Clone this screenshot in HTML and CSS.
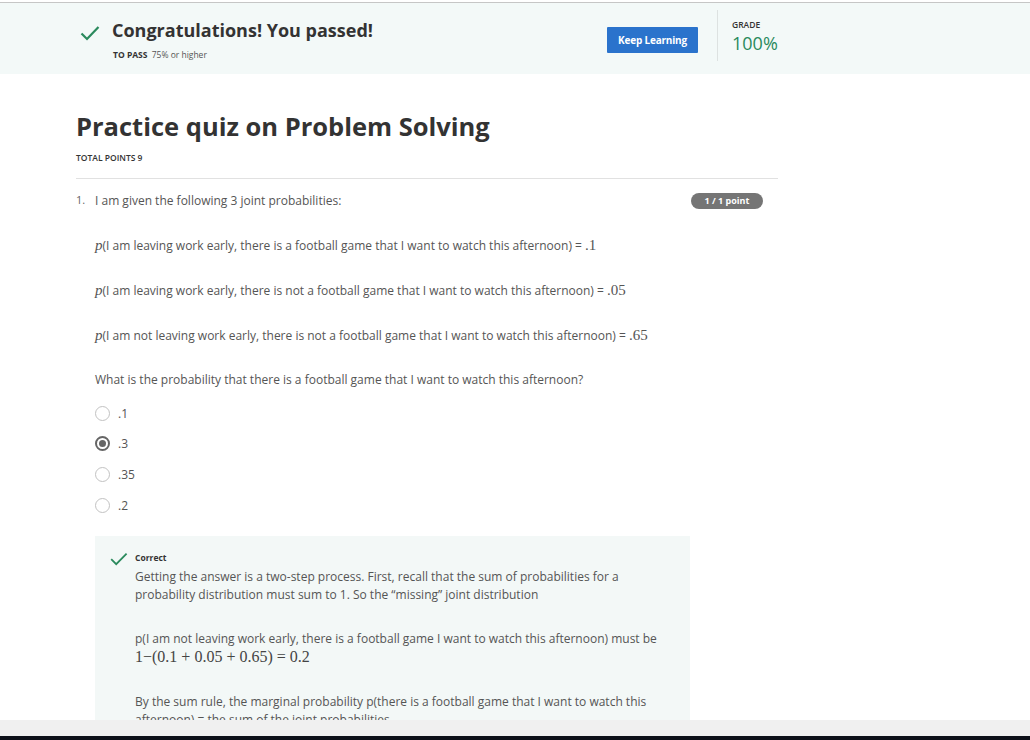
FILE: index.html
```html
<!DOCTYPE html>
<html>
<head>
<meta charset="utf-8">
<link rel="stylesheet" href="styles.css">
</head>
<body>
<div class="page">
  <div class="topline"></div>
  <div class="viewport">
    <header class="banner">
      <div class="banner-inner">
        <svg class="check-lg" width="20" height="16" viewBox="0 0 20 16"><path d="M1.5 8.5 L7 14 L18.5 2" fill="none" stroke="#2a8a5d" stroke-width="2.2"/></svg>
        <div class="pass-block">
          <div class="pass-title">Congratulations! You passed!</div>
          <div class="pass-sub"><span class="pass-label">TO PASS</span> 75% or higher</div>
        </div>
        <button class="btn">Keep Learning</button>
        <div class="divider"></div>
        <div class="grade">
          <div class="grade-label">GRADE</div>
          <div class="grade-value">100%</div>
        </div>
      </div>
    </header>

    <main class="main">
      <h1 class="title">Practice quiz on Problem Solving</h1>
      <div class="total">TOTAL POINTS 9</div>
      <hr class="rule">

      <div class="question">
        <div class="q-head">
          <span class="q-num">1.</span>
          <span class="q-text">I am given the following 3 joint probabilities:</span>
          <span class="badge">1 / 1 point</span>
        </div>
        <div class="q-body">
          <p class="q-p"><span class="m-it">p</span>(I am leaving work early, there is a football game that I want to watch this afternoon) = <span class="m">.1</span></p>
          <p class="q-p"><span class="m-it">p</span>(I am leaving work early, there is not a football game that I want to watch this afternoon) = <span class="m">.05</span></p>
          <p class="q-p"><span class="m-it">p</span>(I am not leaving work early, there is not a football game that I want to watch this afternoon) = <span class="m">.65</span></p>
          <p class="q-p q-ask">What is the probability that there is a football game that I want to watch this afternoon?</p>

          <div class="options">
            <div class="opt"><span class="radio"></span><span class="opt-l">.1</span></div>
            <div class="opt"><span class="radio on"></span><span class="opt-l">.3</span></div>
            <div class="opt"><span class="radio"></span><span class="opt-l">.35</span></div>
            <div class="opt"><span class="radio"></span><span class="opt-l">.2</span></div>
          </div>

          <div class="feedback">
            <svg class="check-sm" width="18" height="14" viewBox="0 0 18 14"><path d="M1.2 7.2 L6.2 12.2 L16.6 1.6" fill="none" stroke="#2a8a5d" stroke-width="1.8"/></svg>
            <div class="fb-content">
              <div class="fb-label">Correct</div>
              <p class="fb-p">Getting the answer is a two-step process. First, recall that the sum of probabilities for a probability distribution must sum to 1. So the “missing” joint distribution</p>
              <p class="fb-p">p(I am not leaving work early, there is a football game I want to watch this afternoon) must be<br><span class="m-lg">1−(0.1 + 0.05 + 0.65) = 0.2</span></p>
              <p class="fb-p">By the sum rule, the marginal probability p(there is a football game that I want to watch this afternoon) = the sum of the joint probabilities</p>
            </div>
          </div>
        </div>
      </div>
    </main>
  </div>
  <div class="hscroll"></div>
  <div class="blackbar"></div>
</div>
</body>
</html>
```

FILE: styles.css
```css
html, body {
  margin: 0;
  padding: 0;
  background: #ffffff;
}
body {
  font-family: "Open Sans", "Noto Sans", sans-serif;
  color: #555555;
}
.page {
  width: 1030px;
  height: 740px;
  display: flex;
  flex-direction: column;
  overflow: hidden;
}
.topline {
  height: 2px;
  border-bottom: 1px solid #c6c6c6;
  flex: none;
}
.viewport {
  flex: 1;
  overflow: hidden;
}
.hscroll {
  flex: none;
  height: 16px;
  background: #f0f0f0;
}
.blackbar {
  flex: none;
  height: 4px;
  background: #0d1119;
}

/* Banner */
.banner {
  background: #f3f9f8;
  height: 71px;
}
.banner-inner {
  width: 698px;
  margin-left: 80px;
  height: 71px;
  display: flex;
  align-items: center;
}
.check-lg {
  flex: none;
  margin-right: 12px;
  margin-top: -12px;
}
.pass-block {
  flex: 1;
  margin-top: 1px;
}
.pass-title {
  font-size: 18px;
  font-weight: 700;
  color: #333333;
  line-height: 24px;
}
.pass-sub {
  font-size: 8.5px;
  color: #555;
  margin-top: 7px;
  line-height: 12px;
  padding-left: 1px;
}
.pass-label {
  font-weight: 700;
  color: #333;
  margin-right: 2px;
}
.btn {
  flex: none;
  width: 91px;
  height: 26px;
  background: #2a73cc;
  color: #ffffff;
  border: none;
  border-radius: 1px;
  font-family: "Open Sans", "Noto Sans", sans-serif;
  font-weight: 700;
  font-size: 10px;
  letter-spacing: -0.2px;
  padding: 0;
  margin-top: 3px;
}
.divider {
  flex: none;
  width: 1px;
  height: 51px;
  background: #dde2e1;
  margin: -7px 14px 0 19px;
}
.grade {
  flex: none;
  width: 46px;
  margin-top: -5px;
}
.grade-label {
  font-size: 8.5px;
  font-weight: 600;
  color: #333;
  line-height: 12px;
}
.grade-value {
  font-size: 18px;
  color: #2a8a5d;
  line-height: 22px;
  margin-top: 1px;
}

/* Main */
.main {
  width: 702px;
  margin-left: 76px;
  padding-top: 35px;
}
.title {
  margin: 0;
  font-size: 25.5px;
  font-weight: 700;
  color: #333333;
  line-height: 34px;
}
.total {
  font-size: 8.5px;
  font-weight: 600;
  color: #333;
  margin-top: 9px;
  line-height: 12px;
}
.rule {
  border: none;
  border-top: 1px solid #e1e1e1;
  margin: 14px 0 0 0;
  height: 0;
}
.question {
  padding-top: 13px;
}
.q-head {
  display: flex;
  align-items: center;
  line-height: 18px;
}
.q-num {
  width: 19px;
  font-size: 11px;
  color: #666;
  margin-top: -3px;
}
.q-text {
  flex: 1;
  font-size: 12px;
}
.badge {
  flex: none;
  width: 72px;
  height: 16px;
  background: #757575;
  border-radius: 8px;
  color: #fff;
  font-size: 9px;
  font-weight: 700;
  text-align: center;
  line-height: 16px;
  margin-right: 15px;
}
.q-body {
  padding-left: 19px;
}
.q-p {
  margin: 26px 0 0 0;
  font-size: 12px;
  line-height: 18px;
}
.m-it {
  font-family: "Liberation Serif", "DejaVu Serif", serif;
  font-style: italic;
  font-size: 15px;
  color: #555;
}
.m {
  font-family: "Liberation Serif", "DejaVu Serif", serif;
  font-size: 15px;
}
.options {
  margin-top: 9px;
}
.opt {
  height: 30.67px;
  display: flex;
  align-items: center;
}
.radio {
  box-sizing: border-box;
  width: 15px;
  height: 15px;
  border: 1.5px solid #c2c2c2;
  border-radius: 50%;
  margin-right: 8px;
  display: flex;
  align-items: center;
  justify-content: center;
}
.radio.on {
  border: 2px solid #666;
}
.radio.on::after {
  content: "";
  width: 7px;
  height: 7px;
  border-radius: 50%;
  background: #666;
}
.opt-l {
  font-size: 12px;
  color: #555;
}

/* Feedback */
.feedback {
  margin-top: 15px;
  width: 595px;
  background: #f3f8f7;
  display: flex;
  padding: 15px 0 20px 15px;
  box-sizing: border-box;
}
.check-sm {
  flex: none;
  margin-right: 7px;
  margin-top: 1px;
}
.fb-content {
  width: 532px;
}
.fb-label {
  font-size: 8.5px;
  font-weight: 700;
  color: #333;
  line-height: 14px;
}
.fb-p {
  margin: 26px 0 0 0;
  font-size: 12px;
  line-height: 18px;
}
.fb-label + .fb-p {
  margin-top: 3px;
}
.m-lg {
  font-family: "Liberation Serif", "DejaVu Serif", serif;
  font-size: 16px;
  color: #444;
}
```
